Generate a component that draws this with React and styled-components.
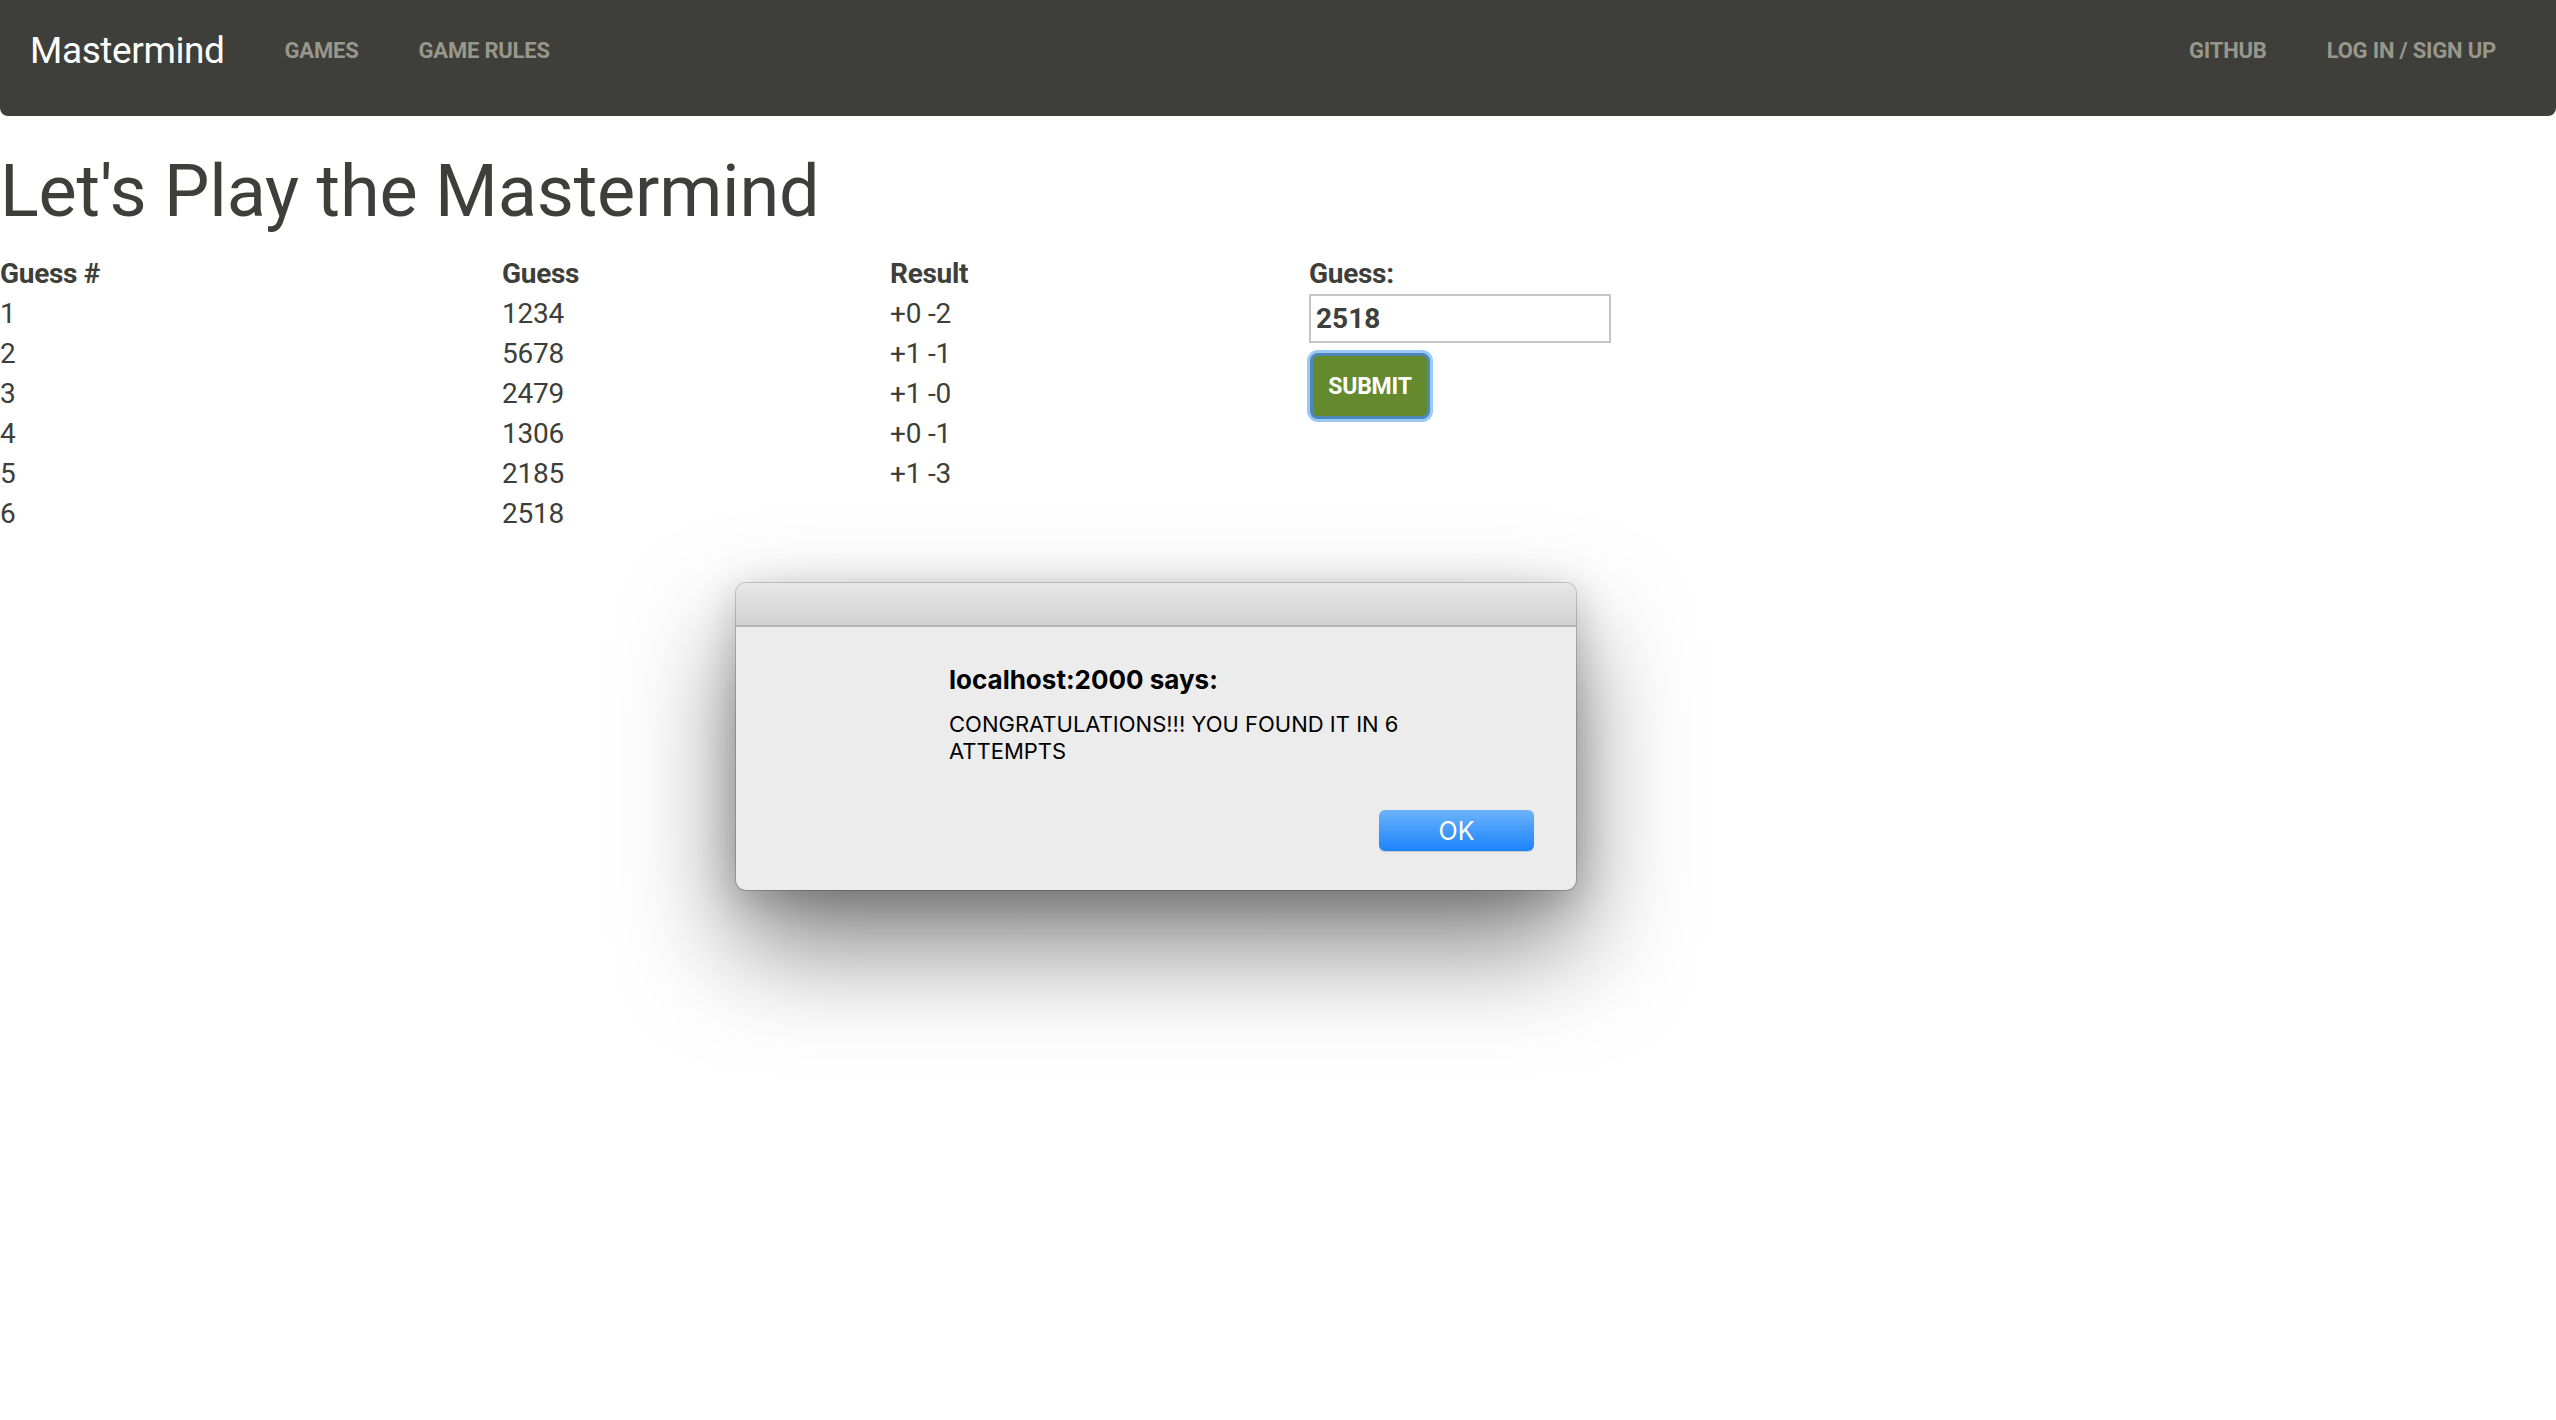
import React from "react";
import styled, { createGlobalStyle } from "styled-components";

const Global = createGlobalStyle`
  html, body { margin: 0; padding: 0; background: #fff; }
  body {
    font-family: Roboto, "Helvetica Neue", Arial, sans-serif;
    color: #3e3f3a;
    font-size: 28px;
    line-height: 40px;
  }
  * { box-sizing: border-box; }
`;

const Navbar = styled.nav`
  height: 116px;
  background: #3e3f3a;
  border-radius: 0 0 8px 8px;
  display: flex;
  align-items: flex-start;
  justify-content: space-between;
  padding: 31px 30px 0 0;
`;

const NavGroup = styled.div`
  display: flex;
  align-items: center;
`;

const Brand = styled.a`
  color: #fff;
  font-size: 37px;
  line-height: 40px;
  font-weight: 400;
  padding: 0 30px;
  letter-spacing: -0.4px;
`;

const NavLink = styled.a`
  color: #98978b;
  font-size: 22px;
  line-height: 40px;
  font-weight: 700;
  text-transform: uppercase;
  padding: 0 30px;
  letter-spacing: -0.2px;
`;

const Heading = styled.h1`
  font-size: 72px;
  line-height: 80px;
  font-weight: 400;
  margin: 36px 0 22px;
  letter-spacing: -0.2px;
`;

const Main = styled.div`
  display: grid;
  grid-template-columns: 1278px 1fr;
  column-gap: 29px;
`;

const Table = styled.div`
  display: grid;
  grid-template-columns: 502px 388px 1fr;
`;

const HeadCell = styled.div`
  font-weight: 700;
  line-height: 40px;
  letter-spacing: -0.3px;
`;

const Cell = styled.div`
  line-height: 40px;
  letter-spacing: -0.2px;
`;

const Form = styled.div`
  display: flex;
  flex-direction: column;
  align-items: flex-start;
`;

const Label = styled.label`
  font-weight: 700;
  line-height: 40px;
  letter-spacing: -0.3px;
  margin-left: 2px;
`;

const Input = styled.div`
  width: 302px;
  height: 49px;
  margin-left: 2px;
  border: 2px solid #c4c4c4;
  font-weight: 700;
  font-size: 28px;
  line-height: 45px;
  padding-left: 5px;
  color: #3e3f3a;
`;

const SubmitButton = styled.button`
  margin-top: 10px;
  width: 120px;
  height: 66px;
  background: #648a2d;
  color: #fff;
  font-family: Roboto, sans-serif;
  font-weight: 700;
  font-size: 23px;
  border: 3px solid #4e88b8;
  border-radius: 8px;
  box-shadow: 0 0 0 3px #98c9f7;
  margin-left: 3px;
  padding: 0;
  letter-spacing: -0.2px;
`;

const Dialog = styled.div`
  position: absolute;
  left: 736px;
  top: 583px;
  width: 840px;
  height: 307px;
  background: #ececec;
  border-radius: 10px;
  overflow: hidden;
  box-shadow: 0 0 0 1px rgba(0, 0, 0, 0.18), 0 55px 110px rgba(0, 0, 0, 0.5),
    0 10px 40px rgba(0, 0, 0, 0.2);
  font-family: Inter, "Helvetica Neue", Arial, sans-serif;
  color: #000;
  display: flex;
  flex-direction: column;
`;

const TitleBar = styled.div`
  height: 44px;
  background: linear-gradient(#e8e7e8, #d3d2d3);
  border-bottom: 2px solid #b6b6b6;
`;

const DialogBody = styled.div`
  flex: 1;
  padding: 35px 42px 0 213px;
  display: flex;
  flex-direction: column;
`;

const DialogTitle = styled.div`
  font-weight: 700;
  font-size: 26px;
  line-height: 36px;
`;

const DialogMessage = styled.div`
  margin-top: 13px;
  font-size: 22px;
  line-height: 27px;
  width: 480px;
`;

const ButtonRow = styled.div`
  display: flex;
  justify-content: flex-end;
  margin-top: 45px;
`;

const OkButton = styled.button`
  width: 155px;
  height: 41px;
  border: none;
  border-radius: 6px;
  background: linear-gradient(#6cb3fa, #1a83fb);
  color: #fff;
  font-family: Inter, "Helvetica Neue", Arial, sans-serif;
  font-size: 25px;
  padding: 0;
  box-shadow: 0 1px 1px rgba(0, 0, 0, 0.15);
`;

const rows = [
  ["1", "1234", "+0 -2"],
  ["2", "5678", "+1 -1"],
  ["3", "2479", "+1 -0"],
  ["4", "1306", "+0 -1"],
  ["5", "2185", "+1 -3"],
  ["6", "2518", ""],
];

export default function App() {
  return (
    <>
      <Global />
      <Navbar>
        <NavGroup>
          <Brand>Mastermind</Brand>
          <NavLink>Games</NavLink>
          <NavLink>Game Rules</NavLink>
        </NavGroup>
        <NavGroup>
          <NavLink>Github</NavLink>
          <NavLink>Log In / Sign Up</NavLink>
        </NavGroup>
      </Navbar>
      <Heading>Let's Play the Mastermind</Heading>
      <Main>
        <Table>
          <HeadCell>Guess #</HeadCell>
          <HeadCell>Guess</HeadCell>
          <HeadCell>Result</HeadCell>
          {rows.map((r) => (
            <React.Fragment key={r[0]}>
              <Cell>{r[0]}</Cell>
              <Cell>{r[1]}</Cell>
              <Cell>{r[2]}</Cell>
            </React.Fragment>
          ))}
        </Table>
        <Form>
          <Label>Guess:</Label>
          <Input>2518</Input>
          <SubmitButton>SUBMIT</SubmitButton>
        </Form>
      </Main>
      <Dialog>
        <TitleBar />
        <DialogBody>
          <DialogTitle>localhost:2000 says:</DialogTitle>
          <DialogMessage>CONGRATULATIONS!!! YOU FOUND IT IN 6 ATTEMPTS</DialogMessage>
          <ButtonRow>
            <OkButton>OK</OkButton>
          </ButtonRow>
        </DialogBody>
      </Dialog>
    </>
  );
}
